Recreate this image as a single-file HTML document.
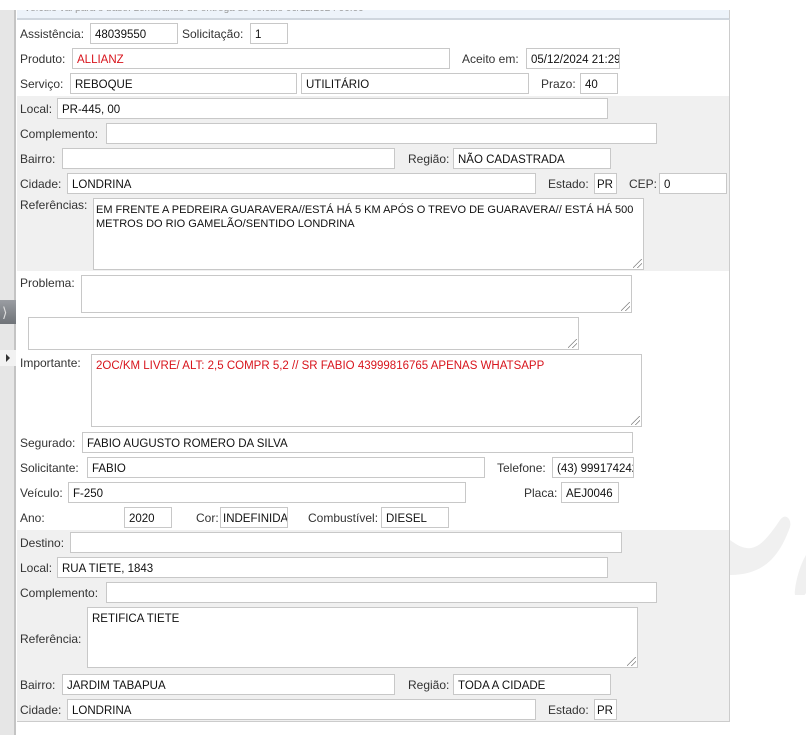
<!DOCTYPE html>
<html><head><meta charset="utf-8"><style>
*{margin:0;padding:0;box-sizing:border-box}
body{width:806px;height:735px;background:#fff;position:relative;overflow:hidden;font-family:"Liberation Sans","DejaVu Sans",sans-serif;font-size:12px;color:#333}
.a{position:absolute}
.l{position:absolute;white-space:nowrap;line-height:14px}
.i{position:absolute;background:#fff;border:1px solid #c8c8c8;height:21px;padding:4px 4px 2px;line-height:14px;color:#111;white-space:nowrap;overflow:hidden;font-size:11.5px}
.t{position:absolute;background:#fff;border:1px solid #c8c8c8;padding:3px 8px;line-height:14px;color:#111;font-size:11.5px}
.t:after{content:"";position:absolute;right:1px;bottom:1px;width:9px;height:9px;background:linear-gradient(135deg,transparent 45%,#888 46%,#888 52%,transparent 53%,transparent 70%,#888 71%,#888 77%,transparent 78%)}
</style></head><body>
<div class="a" style="left:0;top:10px;width:16px;height:725px;background:#e6e6e6;border-right:2px solid #c4c4c4"></div>
<div class="a" style="left:0;top:300px;width:16px;height:24px;background:linear-gradient(#9a9da2,#6f7378)"></div>
<div class="a" style="left:2px;top:304px;color:#ddd;font-size:14px">&#10217;</div>
<div class="a" style="left:0;top:350px;width:16px;height:16px;background:#f2f2f2"></div>
<div class="a" style="left:6px;top:354px;width:0;height:0;border-left:4px solid #333;border-top:4px solid transparent;border-bottom:4px solid transparent"></div>
<div class="a" style="left:17px;top:10px;width:713px;height:10px;background:#edf3fa;border-bottom:2px solid #cfd6de;border-right:1px solid #ccc;overflow:hidden">
<div style="position:absolute;left:7px;top:-7px;font-size:10px;color:#999;white-space:nowrap;line-height:12px">Veículo vai para o base: Lembrando de entrega de veículo 06/12/2024 00:00</div></div>
<div class="a" style="left:0;top:0;width:806px;height:10px;background:#fff"></div>
<div class="a" style="left:17px;top:20px;width:713px;height:702px;border-right:1px solid #ccc;border-bottom:1px solid #ccc"></div>
<div class="a" style="left:17px;top:96px;width:712px;height:175px;background:#f0f0f0"></div>
<div class="a" style="left:17px;top:530px;width:712px;height:191px;background:#f0f0f0"></div>
<svg class="a" style="left:730px;top:515px" width="76" height="80"><path d="M0 25 C20 40 30 35 50 5 C56 -3 62 5 60 12 C50 40 35 60 0 60Z" fill="#f0f0f0"/><path d="M76 40 C70 50 66 65 65 75 C63 85 72 85 76 78Z" fill="#f0f0f0"/></svg>

<div class="l" style="left:20px;top:27px">Assistência:</div><div class="i" style="left:90px;top:23px;width:88px">48039550</div>
<div class="l" style="left:182px;top:27px">Solicitação:</div><div class="i" style="left:250px;top:23px;width:38px">1</div>
<div class="l" style="left:20px;top:52px">Produto:</div><div class="i" style="left:72px;top:48px;width:378px;color:#d8141c">ALLIANZ</div>
<div class="l" style="left:462px;top:52px">Aceito em:</div><div class="i" style="left:526px;top:48px;width:94px">05/12/2024 21:29</div>
<div class="l" style="left:20px;top:77px">Serviço:</div><div class="i" style="left:70px;top:73px;width:227px">REBOQUE</div><div class="i" style="left:301px;top:73px;width:228px">UTILITÁRIO</div>
<div class="l" style="left:541px;top:77px">Prazo:</div><div class="i" style="left:580px;top:73px;width:38px">40</div>
<div class="l" style="left:20px;top:102px">Local:</div><div class="i" style="left:57px;top:98px;width:551px">PR-445, 00</div>
<div class="l" style="left:20px;top:127px">Complemento:</div><div class="i" style="left:106px;top:123px;width:551px"></div>
<div class="l" style="left:20px;top:152px">Bairro:</div><div class="i" style="left:62px;top:148px;width:333px"></div>
<div class="l" style="left:408px;top:152px">Região:</div><div class="i" style="left:453px;top:148px;width:158px">NÃO CADASTRADA</div>
<div class="l" style="left:20px;top:177px">Cidade:</div><div class="i" style="left:67px;top:173px;width:469px">LONDRINA</div>
<div class="l" style="left:548px;top:177px">Estado:</div><div class="i" style="left:594px;top:173px;width:23px;padding:4px 2px 2px">PR</div>
<div class="l" style="left:629px;top:177px">CEP:</div><div class="i" style="left:659px;top:173px;width:68px">0</div>
<div class="l" style="left:20px;top:198px">Referências:</div><div class="t" style="left:93px;top:198px;width:551px;height:72px;padding:4px 2px;font-size:11px">EM FRENTE A PEDREIRA GUARAVERA//ESTÁ HÁ 5 KM APÓS O TREVO DE GUARAVERA// ESTÁ HÁ 500 METROS DO RIO GAMELÃO/SENTIDO LONDRINA</div>
<div class="l" style="left:20px;top:276px">Problema:</div><div class="t" style="left:81px;top:275px;width:551px;height:38px"></div>
<div class="t" style="left:28px;top:317px;width:551px;height:33px"></div>
<div class="l" style="left:20px;top:356px">Importante:</div><div class="t" style="left:91px;top:354px;width:551px;height:73px;padding:4px 4px;color:#d8141c">2OC/KM LIVRE/ ALT: 2,5 COMPR 5,2 // SR FABIO 43999816765 APENAS WHATSAPP</div>
<div class="l" style="left:20px;top:436px">Segurado:</div><div class="i" style="left:82px;top:432px;width:551px">FABIO AUGUSTO ROMERO DA SILVA</div>
<div class="l" style="left:20px;top:461px">Solicitante:</div><div class="i" style="left:87px;top:457px;width:398px">FABIO</div>
<div class="l" style="left:497px;top:461px">Telefone:</div><div class="i" style="left:552px;top:457px;width:82px">(43) 999174242</div>
<div class="l" style="left:20px;top:486px">Veículo:</div><div class="i" style="left:68px;top:482px;width:398px">F-250</div>
<div class="l" style="left:524px;top:486px">Placa:</div><div class="i" style="left:561px;top:482px;width:58px">AEJ0046</div>
<div class="l" style="left:20px;top:511px">Ano:</div><div class="i" style="left:124px;top:507px;width:48px">2020</div>
<div class="l" style="left:196px;top:511px">Cor:</div><div class="i" style="left:220px;top:507px;width:68px;padding:4px 2px 2px">INDEFINIDA</div>
<div class="l" style="left:308px;top:511px">Combustível:</div><div class="i" style="left:381px;top:507px;width:68px">DIESEL</div>
<div class="l" style="left:20px;top:536px">Destino:</div><div class="i" style="left:70px;top:532px;width:552px"></div>
<div class="l" style="left:20px;top:561px">Local:</div><div class="i" style="left:57px;top:557px;width:551px">RUA TIETE, 1843</div>
<div class="l" style="left:20px;top:586px">Complemento:</div><div class="i" style="left:106px;top:582px;width:551px"></div>
<div class="l" style="left:20px;top:632px">Referência:</div><div class="t" style="left:87px;top:607px;width:551px;height:61px;padding:4px 4px">RETIFICA TIETE</div>
<div class="l" style="left:20px;top:678px">Bairro:</div><div class="i" style="left:62px;top:674px;width:333px">JARDIM TABAPUA</div>
<div class="l" style="left:408px;top:678px">Região:</div><div class="i" style="left:453px;top:674px;width:158px">TODA A CIDADE</div>
<div class="l" style="left:20px;top:703px">Cidade:</div><div class="i" style="left:67px;top:699px;width:469px">LONDRINA</div>
<div class="l" style="left:548px;top:703px">Estado:</div><div class="i" style="left:594px;top:699px;width:23px;padding:4px 2px 2px">PR</div>
</body></html>
